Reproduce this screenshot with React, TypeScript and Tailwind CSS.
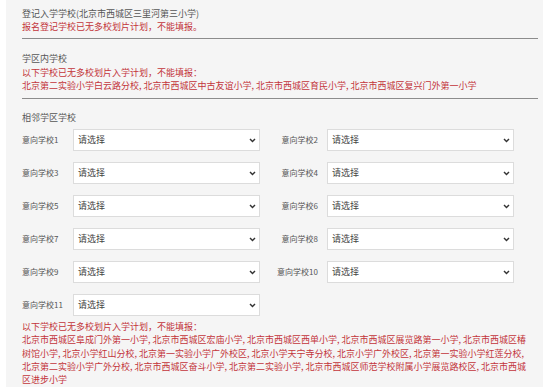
const fields = [
  '意向学校1',
  '意向学校2',
  '意向学校3',
  '意向学校4',
  '意向学校5',
  '意向学校6',
  '意向学校7',
  '意向学校8',
  '意向学校9',
  '意向学校10',
  '意向学校11',
];

function Chevron() {
  return (
    <svg width="7" height="5" viewBox="0 0 7 5" className="shrink-0">
      <path d="M1 1 L3.5 3.6 L6 1" fill="none" stroke="#333" strokeWidth="1.4" />
    </svg>
  );
}

function SelectBox() {
  return (
    <div className="w-[187px] h-[22px] bg-white border border-[#dcdcdc] flex items-center justify-between pl-[4px] pr-[3px] text-[9px] text-[#444]">
      <span>请选择</span>
      <Chevron />
    </div>
  );
}

export default function App() {
  const rows: string[][] = [];
  for (let i = 0; i < fields.length; i += 2) rows.push(fields.slice(i, i + 2));

  return (
    <div className="w-[543px] h-[387px] overflow-hidden bg-white pl-[6px] font-['Noto_Sans_CJK_SC','Liberation_Sans',sans-serif]">
      <div className="h-full bg-[#f5f5f5] pl-[16px] pr-[5px] pt-[7px]">
        {/* 登记入学学校 */}
        <div className="text-[9px] leading-[13px]">
          <p className="text-[#555]">登记入学学校(北京市西城区三里河第三小学)</p>
          <p className="text-[#c3343a]">报名登记学校已无多校划片计划，不能填报。</p>
        </div>
        <div className="mt-[5px] border-t border-[#8c8c8c]" />

        {/* 学区内学校 */}
        <div className="mt-[13px] text-[9px] leading-[13.5px]">
          <p className="text-[#555]">学区内学校</p>
          <p className="text-[#c3343a]">以下学校已无多校划片入学计划，不能填报：</p>
          <p className="text-[#c3343a]">
            北京第二实验小学白云路分校, 北京市西城区中古友谊小学, 北京市西城区育民小学, 北京市西城区复兴门外第一小学
          </p>
        </div>
        <div className="mt-[5px] border-t border-[#8c8c8c]" />

        {/* 相邻学区学校 */}
        <p className="mt-[12px] text-[9px] leading-[13.5px] text-[#555]">相邻学区学校</p>
        <div className="mt-[5px] flex flex-col gap-[11px]">
          {rows.map((row, i) => (
            <div key={i} className="flex gap-[10px]">
              <div className="flex items-center">
                <span className="w-[51px] text-[8px] text-[#555]">{row[0]}</span>
                <SelectBox />
              </div>
              {row[1] && (
                <div className="flex items-center">
                  <span className="w-[57px] pr-[9px] text-right text-[8px] text-[#555]">{row[1]}</span>
                  <SelectBox />
                </div>
              )}
            </div>
          ))}
        </div>

        <div className="mt-[4px] pr-[6px] text-[9px] leading-[13.25px] text-[#c3343a]">
          <p>以下学校已无多校划片入学计划，不能填报：</p>
          <p>
            北京市西城区阜成门外第一小学, 北京市西城区宏庙小学, 北京市西城区西单小学, 北京市西城区展览路第一小学, 北京市西城区椿树馆小学, 北京小学红山分校, 北京第一实验小学广外校区, 北京小学天宁寺分校, 北京小学广外校区, 北京第一实验小学红莲分校, 北京第二实验小学广外分校, 北京市西城区奋斗小学, 北京第二实验小学, 北京市西城区师范学校附属小学展览路校区, 北京市西城区进步小学
          </p>
        </div>
      </div>
    </div>
  );
}
